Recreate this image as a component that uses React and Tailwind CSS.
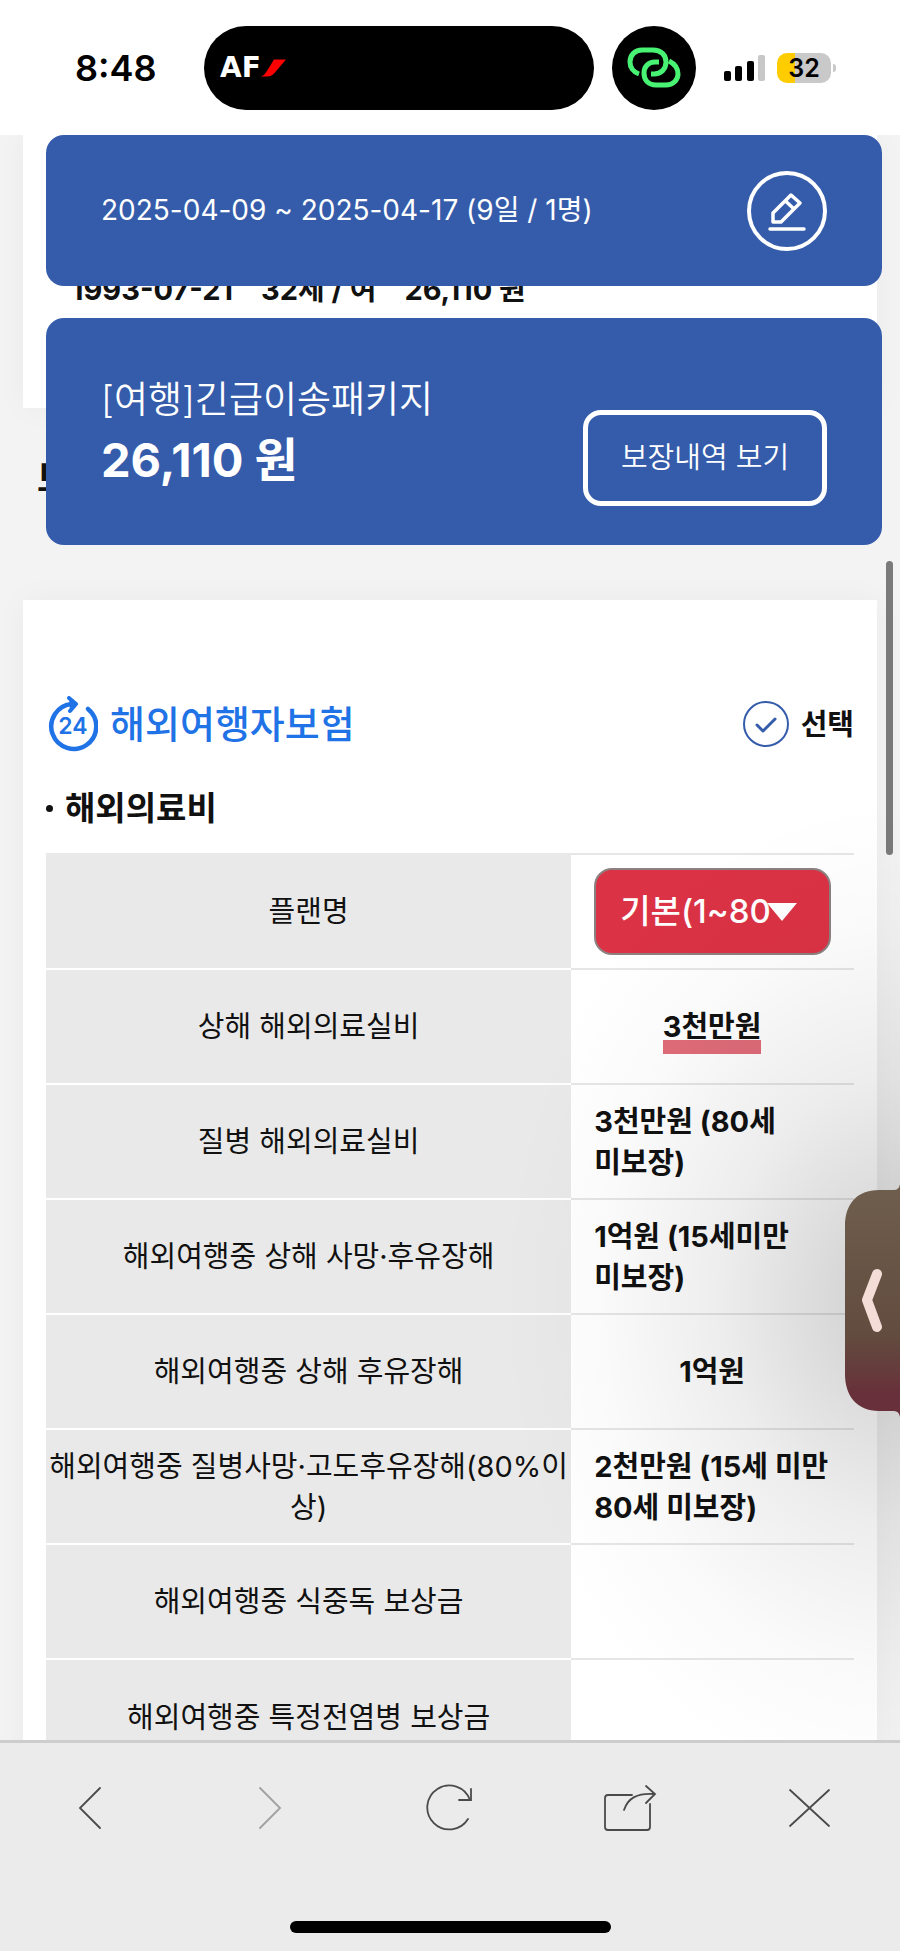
import { useState } from "react";

const coverages = [
  { name: "상해 해외의료실비", value: "3천만원", marked: true },
  { name: "질병 해외의료실비", value: "3천만원 (80세 미보장)" },
  { name: "해외여행중 상해 사망·후유장해", value: "1억원 (15세미만 미보장)" },
  { name: "해외여행중 상해 후유장해", value: "1억원" },
  { name: "해외여행중 질병사망·고도후유장해(80%이상)", value: "2천만원 (15세 미만 80세 미보장)" },
  { name: "해외여행중 식중독 보상금", value: "" },
  { name: "해외여행중 특정전염병 보상금", value: "" },
];

function StatusBar() {
  return (
    <header className="flex shrink-0 items-center bg-white pt-[26px] pr-16 pb-[25px] pl-[75px]">
      <span className="w-[129px] text-[36px] leading-none font-semibold text-black">8:48</span>
      <div className="flex h-[84px] flex-1 items-center rounded-full bg-black pl-4">
        <span className="font-['DejaVu_Sans'] text-[28px] leading-none font-bold text-white">AF</span>
        <svg width="25" height="18" viewBox="0 0 25 17" aria-hidden="true">
          <path d="M13 0H25L13.500 13.500Q10.500 17 6 17H0Q3.500 15.500 5 13Z" fill="#fe0000" />
        </svg>
      </div>
      <div className="ml-[18px] flex size-[84px] items-center justify-center rounded-full bg-black">
        <svg width="54" height="44" viewBox="0 0 54 44" fill="none" stroke="#48f272" strokeWidth="5" aria-hidden="true">
          <path d="M12 28C6 26 3 21 3 16C3 9 8 4 15 4H26C34 4 39 9 39 16C39 23 34 28 27 28H24" />
          <path d="M32 16H28C21 16 17 21 17 27C17 34 21 39 29 39H39C46 39 51 34 51 28C51 22 48 18 42 15" />
        </svg>
      </div>
      <svg className="ml-[27px]" width="42" height="28" viewBox="0 0 42 28" aria-hidden="true">
        <rect x="1" y="17" width="7" height="10" rx="2" />
        <rect x="12" y="12" width="7" height="15" rx="2" />
        <rect x="24" y="7" width="7" height="20" rx="2" />
        <rect x="35" y="1" width="7" height="26" rx="2" fill="#c8c8c8" />
      </svg>
      <div className="ml-3 flex items-center gap-[2px]">
        <div className="flex h-[30px] w-[54px] items-center justify-center rounded-[10px] bg-linear-to-r from-[#ffcc00] from-33% to-[#c9c9c9] to-33% text-[25px] leading-none font-semibold text-black">
          32
        </div>
        <div className="h-2 w-[3px] rounded-r-full bg-[#c9c9c9]" />
      </div>
    </header>
  );
}

function TripSummary() {
  return (
    <div className="absolute inset-x-0 top-0 flex flex-col gap-8 pr-[18px] pl-[46px] text-white">
      <section className="flex h-[151px] items-center justify-between rounded-[18px] bg-[#355cab] px-[55px]">
        <p className="text-[28px] leading-[41px]">2025-04-09 ~ 2025-04-17 (9일 / 1명)</p>
        <button aria-label="수정" className="flex size-20 items-center justify-center rounded-full border-4 border-white">
          <svg width="40" height="40" viewBox="0 0 40 40" fill="none" stroke="currentColor" strokeWidth="3.500" strokeLinejoin="round" aria-hidden="true">
            <path d="M6 31V22L24 4L33 12L14 31Z" />
            <path d="M18.500 10L27 18" />
            <path d="M3 38H37" strokeLinecap="round" />
          </svg>
        </button>
      </section>

      <section className="flex items-end justify-between rounded-[18px] bg-[#355cab] px-[55px] pt-[52px] pb-[39px]">
        <div className="pb-4 leading-[60px]">
          <h2 className="text-[37px] font-[350]">[여행]긴급이송패키지</h2>
          <p className="text-[47px] font-bold">26,110 원</p>
        </div>
        <button className="h-24 w-[244px] rounded-[18px] border-[5px] border-white text-[29px] font-[350]">
          보장내역 보기
        </button>
      </section>
    </div>
  );
}

function CoverageTable() {
  const [plan, setPlan] = useState("basic");

  return (
    <table className="w-full table-fixed text-[29px] leading-[41px] text-[#111]">
      <tbody>
        <tr className="h-[115px]">
          <th className="w-[65%] border-t-2 border-[#e9e9e9] bg-[#e9e9e9] p-0 font-normal">
            <label htmlFor="plan">플랜명</label>
          </th>
          <td className="border-t-2 border-[#e6e6e6] px-[23px]">
            <div className="relative">
              <select
                id="plan"
                value={plan}
                onChange={(e) => setPlan(e.target.value)}
                className="block h-[87px] w-full appearance-none rounded-[18px] border-2 border-[#8d8080] bg-[#db3245] pr-[58px] pl-6 text-[33px] font-medium text-white"
              >
                <option value="basic">기본(1~80세)</option>
              </select>
              <svg className="pointer-events-none absolute top-[35px] right-[34px]" width="30" height="18" viewBox="0 0 30 18" aria-hidden="true">
                <path d="M0 0H30L15 18Z" fill="#fff" />
              </svg>
            </div>
          </td>
        </tr>
        {coverages.map((item) => (
          <tr key={item.name} className="h-[115px]">
            <th className="border-t-2 border-white bg-[#e9e9e9] p-0 font-normal break-all">{item.name}</th>
            <td className="border-t-2 border-[#e6e6e6] pr-4 pl-[23px] font-bold break-keep">
              {/* short amounts sit in the middle, long ones wrap from the left */}
              <div className={item.value.includes(" ") ? "text-left" : "pr-2 text-center"}>
                {item.marked ? (
                  <span className="relative inline-block">
                    <span className="absolute inset-x-0 bottom-[-7px] h-[14px] bg-[#e06c79]" />
                    <span className="relative">{item.value}</span>
                  </span>
                ) : (
                  item.value
                )}
              </div>
            </td>
          </tr>
        ))}
      </tbody>
    </table>
  );
}

function SideTab() {
  return (
    <>
      {/* wide soft shade around the tab */}
      <div className="pointer-events-none absolute top-[665px] right-0 h-[1000px] w-[400px] bg-[radial-gradient(ellipse_400px_500px_at_right,rgba(0,0,0,0.2)_0%,rgba(0,0,0,0.14)_20%,rgba(0,0,0,0.07)_45%,rgba(0,0,0,0.02)_75%,transparent_100%)]" />
      <button aria-label="열기" className="absolute top-[1055px] right-0 h-[221px] w-[55px]">
        <svg className="absolute top-[-6px] left-0" width="55" height="233" viewBox="0 0 55 233" fill="none" aria-hidden="true">
          <defs>
            <linearGradient id="tab" x1="0" y1="0" x2="0" y2="1">
              <stop offset="0" stopColor="#6f5e4d" />
              <stop offset="0.650" stopColor="#624c3f" />
              <stop offset="0.900" stopColor="#68303a" />
              <stop offset="1" stopColor="#68303a" />
            </linearGradient>
          </defs>
          <path d="M55 0Q54 6 49 6H34C12 6 0 20 0 42V190C0 212 12 227 34 227H49Q54 227 55 233Z" fill="url(#tab)" />
          <path d="M32 90L22 116L32 143" stroke="#f3ddd6" strokeWidth="10" strokeLinecap="round" strokeLinejoin="round" />
        </svg>
      </button>
    </>
  );
}

function BrowserBar() {
  return (
    <footer className="relative flex h-[211px] shrink-0 flex-col justify-between border-t-[3px] border-[#cdcdcd] bg-[#ebebeb] pb-[18px]">
      <nav className="grid grid-cols-5 justify-items-center pt-10 text-[#4a4a4a]">
        <button aria-label="뒤로">
          <svg width="50" height="50" viewBox="0 0 50 50" fill="none" stroke="currentColor" strokeWidth="1.800" strokeLinecap="round">
            <path d="M35 5L15 25L35 45" />
          </svg>
        </button>
        <button aria-label="앞으로" className="text-[#a0a0a0]">
          <svg width="50" height="50" viewBox="0 0 50 50" fill="none" stroke="currentColor" strokeWidth="1.800" strokeLinecap="round">
            <path d="M15 5L35 25L15 45" />
          </svg>
        </button>
        <button aria-label="새로고침">
          <svg width="50" height="50" viewBox="0 0 50 50" fill="none" stroke="currentColor" strokeWidth="1.800" strokeLinecap="round">
            <path d="M43 36A22 22 0 1 1 45 17" />
            <path d="M46 6V17H34" />
          </svg>
        </button>
        <button aria-label="공유">
          <svg width="54" height="50" viewBox="0 0 54 50" fill="none" stroke="currentColor" strokeWidth="1.800" strokeLinecap="round">
            <path d="M29 12H5Q2 12 2 15V44Q2 47 5 47H44Q47 47 47 44V21" />
            <path d="M21 27C25 15 34 10 51 11" />
            <path d="M43 3L52 11L43 20" />
          </svg>
        </button>
        <button aria-label="닫기">
          <svg width="50" height="50" viewBox="0 0 50 50" fill="none" stroke="currentColor" strokeWidth="1.800" strokeLinecap="round">
            <path d="M5 7L44 43M44 7L5 43" />
          </svg>
        </button>
      </nav>
      <div className="mx-auto h-3 w-[321px] rounded-full bg-black" />
    </footer>
  );
}

export default function App() {
  const [selected, setSelected] = useState(true);

  return (
    <div className="flex h-screen flex-col overflow-hidden bg-[#f3f3f3] font-['Inter','Noto_Sans_CJK_KR',sans-serif] text-[#111]">
      <StatusBar />

      <main className="relative min-h-0 flex-1 overflow-hidden">
        <section className="mx-[23px] bg-white pt-[134px] pb-[98px] pl-12 shadow-[0_0_30px_rgba(0,0,0,0.04)]">
          <p className="flex gap-7 text-[29px] leading-[41px] font-bold">
            <span>1993-07-21</span>
            <span>32세 / 여</span>
            <span>26,110 원</span>
          </p>
        </section>

        <h2 className="mt-[41px] mb-[91px] ml-[37px] text-[36px] leading-[60px] font-bold">보</h2>

        <section className="mx-[23px] bg-white px-[23px] pt-24 shadow-[0_0_30px_rgba(0,0,0,0.04)]">
          <div className="flex h-14 items-center justify-between">
            <h3 className="flex items-center gap-3 text-[38px] leading-none font-medium text-[#1f73e6]">
              <svg width="52" height="56" viewBox="0 0 52 56" fill="none" stroke="currentColor" strokeWidth="4.500" aria-hidden="true">
                <path d="M42 13A22.500 22.500 0 1 1 26 8" strokeLinecap="round" />
                <path d="M23 2L30 8L24 15" fill="currentColor" strokeWidth="4" strokeLinejoin="round" strokeLinecap="round" />
                <text x="27" y="38" textAnchor="middle" fill="currentColor" stroke="none" fontSize="23" fontWeight="600">24</text>
              </svg>
              해외여행자보험
            </h3>
            <label className="flex items-center gap-3 text-[29px] leading-none font-bold">
              <span className="relative">
                <input
                  type="checkbox"
                  checked={selected}
                  onChange={() => setSelected(!selected)}
                  className="block size-[46px] appearance-none rounded-full border-2 border-[#355cab]"
                />
                {selected && (
                  <svg className="pointer-events-none absolute inset-0" width="46" height="46" viewBox="0 0 46 46" fill="none" stroke="#355cab" strokeWidth="3" strokeLinecap="round" strokeLinejoin="round" aria-hidden="true">
                    <path d="M14 24L20 30L32 18" />
                  </svg>
                )}
              </span>
              선택
            </label>
          </div>

          <h4 className="mt-9 mb-6 flex items-center gap-3 text-[33px] leading-[41px] font-bold">
            <span className="size-[7px] rounded-full bg-[#111]" />
            해외의료비
          </h4>

          <CoverageTable />
        </section>

        <TripSummary />
        <div className="absolute top-[426px] right-[7px] h-[294px] w-[7px] rounded-full bg-[#7a7a7a]" />
        <SideTab />
      </main>

      <BrowserBar />
    </div>
  );
}
